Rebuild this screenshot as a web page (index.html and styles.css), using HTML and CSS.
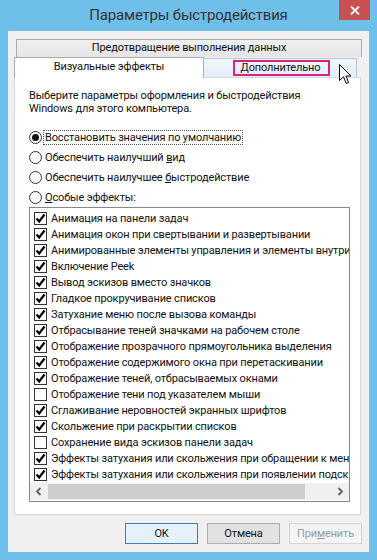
FILE: index.html
```html
<!DOCTYPE html>
<html>
<head>
    <title>Параметры быстродействия</title>
    <link rel="stylesheet" href="styles.css">
</head>
<body>
    <div class="window">
        <div class="titlebar">
            <span></span>
            <div class="title">Параметры быстродействия</div>
            <div class="close">
                <svg width="10" height="9" viewBox="0 0 10 9"><path d="M1 0.5 L9 8.5 M9 0.5 L1 8.5" stroke="#fff" stroke-width="1.8"/></svg>
            </div>
        </div>

        <div class="client">
            <div class="tabs">
                <div class="tab back">Предотвращение выполнения данных</div>
                <div class="tab-row">
                    <div class="tab selected">Визуальные эффекты</div>
                    <div class="tab other"><span class="mark">Дополнительно</span></div>
                </div>
            </div>

            <div class="panel">
                <p class="intro">Выберите параметры оформления и быстродействия<br>Windows для этого компьютера.</p>

                <div class="radios">
                    <div class="radio on"><span class="dot"></span><span class="label focus">Восстановить значения по умолчанию</span></div>
                    <div class="radio"><span class="dot"></span><span class="label">Обеспечить наилучший <u>в</u>ид</span></div>
                    <div class="radio"><span class="dot"></span><span class="label">Обеспечить наилучшее <u>б</u>ыстродействие</span></div>
                    <div class="radio"><span class="dot"></span><span class="label"><u>О</u>собые эффекты:</span></div>
                </div>

                <div class="listbox">
                    <div class="items" id="items"></div>
                    <div class="hscroll">
                        <div class="arrow">
                            <svg width="7" height="9" viewBox="0 0 7 9"><path d="M5.5 1 L2 4.5 L5.5 8" fill="none" stroke="#606060" stroke-width="1.8"/></svg>
                        </div>
                        <div class="track"><div class="thumb"></div></div>
                        <div class="arrow">
                            <svg width="7" height="9" viewBox="0 0 7 9"><path d="M1.5 1 L5 4.5 L1.5 8" fill="none" stroke="#606060" stroke-width="1.8"/></svg>
                        </div>
                    </div>
                </div>
            </div>

            <div class="buttons">
                <button class="default">OK</button>
                <button>Отмена</button>
                <button disabled>При<u>м</u>енить</button>
            </div>
        </div>

        <svg class="cursor" width="13" height="21" viewBox="0 0 13 21">
            <path d="M0.5 0.5 L0.5 16.5 L4.5 12.8 L7.2 19.5 L9.6 18.5 L7 12 L12 12 Z" fill="#fff" stroke="#000" stroke-width="1" stroke-linejoin="miter"/>
        </svg>
    </div>

    <script>
        const effects = [
            ['Анимация на панели задач', true],
            ['Анимация окон при свертывании и развертывании', true],
            ['Анимированные элементы управления и элементы внутри окна', true],
            ['Включение Peek', true],
            ['Вывод эскизов вместо значков', true],
            ['Гладкое прокручивание списков', true],
            ['Затухание меню после вызова команды', true],
            ['Отбрасывание теней значками на рабочем столе', true],
            ['Отображение прозрачного прямоугольника выделения', true],
            ['Отображение содержимого окна при перетаскивании', true],
            ['Отображение теней, отбрасываемых окнами', true],
            ['Отображение тени под указателем мыши', false],
            ['Сглаживание неровностей экранных шрифтов', true],
            ['Скольжение при раскрытии списков', true],
            ['Сохранение вида эскизов панели задач', false],
            ['Эффекты затухания или скольжения при обращении к меню', true],
            ['Эффекты затухания или скольжения при появлении подсказок', true]
        ];

        const tick = '<svg width="11" height="11" viewBox="0 0 11 11"><path d="M1.5 5.5 L4.2 8.5 L9.5 1.5" fill="none" stroke="#000" stroke-width="2.2"/></svg>';

        // Build the checkbox list
        document.getElementById('items').innerHTML = effects.map(([text, checked]) =>
            `<div class="item"><span class="box">${checked ? tick : ''}</span><span>${text}</span></div>`
        ).join('');
    </script>
</body>
</html>
```

FILE: styles.css
```css
body {
    margin: 0;
    font-family: Roboto, sans-serif;
    font-size: 11px;
    letter-spacing: -0.15px;
    color: #111;
}

.window {
    position: relative;
    width: 377px;
    height: 560px;
    background: #6ec0ea;
    display: flex;
    flex-direction: column;
}

.titlebar {
    height: 31px;
    display: grid;
    grid-template-columns: 1fr auto 1fr;
}
.title {
    align-self: center;
    font-size: 15px;
    letter-spacing: -0.2px;
    color: #333;
    margin-top: -1px;
    white-space: nowrap;
}
.close {
    justify-self: end;
    width: 31px;
    height: 20px;
    margin-right: 7px;
    background: #c75050;
    display: flex;
    align-items: center;
    justify-content: center;
}

.client {
    margin: 0 8px;
    height: 521px;
    background: #f0f0f0;
}

/* tabs */
.tabs { width: 348px; margin: 8px 0 0 6px; }
.tab {
    box-sizing: border-box;
    border: 1px solid #acacac;
    text-align: center;
    line-height: 16px;
}
.tab.back {
    margin-left: 2px;
    height: 18px;
    background: linear-gradient(#f0f0f0, #e5e5e5);
    border-bottom: none;
}
.tab-row { display: flex; height: 20px; }
.tab.selected {
    position: relative;
    z-index: 1;
    width: 190px;
    height: 21px;
    background: #fff;
    border-bottom: none;
    line-height: 17px;
}
.tab.other {
    width: 154px;
    height: 19px;
    margin-top: 1px;
    margin-left: -1px;
    border-bottom: none;
    background: linear-gradient(#f0f6fc, #e2edf9);
    border-color: #b5c8dc;
    display: flex;
    justify-content: center;
    align-items: center;
}
.mark {
    border: 2px solid #e01f78;
    padding: 0 6px 0 5px;
    line-height: 12px;
    margin-left: 2px;
    min-width: 82px;
}

.panel {
    box-sizing: border-box;
    width: 347px;
    height: 438px;
    margin-left: 6px;
    background: #fff;
    border: 1px solid #d9d9d9;
    padding: 11px 10px 0 14px;
}
.intro { margin: 0; line-height: 13px; }

.radios { margin-top: 12px; display: flex; flex-direction: column; }
.radio { display: flex; align-items: center; height: 20px; }
.radio .dot {
    box-sizing: border-box;
    width: 13px;
    height: 13px;
    border: 1px solid #333;
    border-radius: 50%;
    background: #fff;
    display: flex;
    align-items: center;
    justify-content: center;
    margin-right: 2px;
}
.radio.on .dot::after {
    content: "";
    width: 7px;
    height: 7px;
    border-radius: 50%;
    background: #111;
}
.label { padding: 0 1px; line-height: 13px; }
.label.focus { outline: 1px dotted #555; outline-offset: 0; }

.listbox {
    box-sizing: border-box;
    width: 321px;
    height: 295px;
    border: 1px solid #828790;
    padding: 2px 0 0 0;
    overflow: hidden;
}
.items { height: 272px; }
.item {
    display: flex;
    align-items: center;
    height: 16px;
    white-space: nowrap;
    gap: 4px;
    padding-left: 4px;
}
.box {
    flex: none;
    box-sizing: border-box;
    width: 13px;
    height: 13px;
    border: 1px solid #333;
    background: #fff;
    display: flex;
    align-items: center;
    justify-content: center;
}

.hscroll {
    display: flex;
    height: 17px;
    background: #f0f0f0;
    margin-top: 1px;
}
.arrow {
    width: 17px;
    display: flex;
    align-items: center;
    justify-content: center;
}
.track { flex: 1; display: flex; padding: 1px 0; }
.thumb { width: 257px; background: #cdcdcd; margin-left: 1px; }

/* dialog buttons */
.buttons {
    display: flex;
    justify-content: flex-end;
    gap: 9px;
    margin-top: 8px;
    padding-right: 7px;
}
button {
    width: 73px;
    height: 21px;
    padding: 0;
    font-family: Roboto, sans-serif;
    font-size: 11px;
    letter-spacing: -0.15px;
    color: #111;
    background: #e1e1e1;
    border: 1px solid #adadad;
}
button.default { border-color: #3c7fb1; background: #e5f1fb; }
button:disabled { color: #9a9a9a; background: #f4f4f4; border-color: #d5d5d5; }

.cursor { position: absolute; left: 339px; top: 64px; }
```
